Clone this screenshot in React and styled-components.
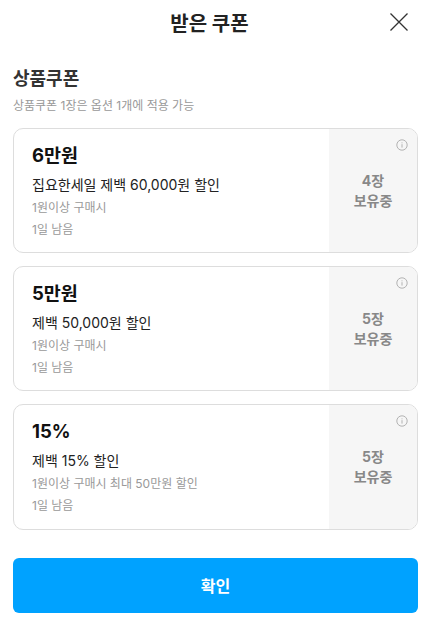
import { createGlobalStyle } from "styled-components";
import styled from "styled-components";

const Global = createGlobalStyle`
    html, body { margin: 0; padding: 0; background: #fff; }
    * { box-sizing: border-box; }
    body { font-family: Inter, "Noto Sans CJK KR", sans-serif; }
`;

const Page = styled.div`
    width: 432px;
    height: 624px;
    overflow: hidden;
    display: flex;
    flex-direction: column;
    padding: 0 14px 0 13px;
`;

const Header = styled.header`
    height: 45px;
    padding-right: 12px;
    display: flex;
    align-items: center;
    justify-content: center;
    position: relative;
`;

const HeaderTitle = styled.h1`
    margin: 0;
    font-size: 20px;
    font-weight: 700;
    color: #222;
`;

const CloseBtn = styled.button`
    position: absolute;
    right: 9px;
    top: 12px;
    width: 20px;
    height: 20px;
    padding: 0;
    border: 0;
    background: none;
    display: flex;
`;

const SectionTitle = styled.h2`
    margin: 22px 0 0;
    font-size: 18px;
    line-height: 24px;
    font-weight: 700;
    color: #333;
`;

const SectionNote = styled.p`
    margin: 6px 0 0;
    font-size: 12px;
    line-height: 18px;
    color: #999;
`;

const CouponList = styled.div`
    margin-top: 13px;
    display: flex;
    flex-direction: column;
    gap: 13px;
`;

const Card = styled.div`
    height: 125.2px;
    display: flex;
    border: 1px solid #ddd;
    border-radius: 10px;
    overflow: hidden;
`;

const CardBody = styled.div`
    flex: 1;
    padding: 12px 0 0 18px;
`;

const Amount = styled.div`
    font-size: 18.5px;
    line-height: 28px;
    font-weight: 700;
    color: #111;
`;

const CouponName = styled.div`
    margin-top: 6px;
    font-size: 14px;
    line-height: 20px;
    color: #222;
`;

const Condition = styled.div`
    margin-top: 4px;
    font-size: 12px;
    line-height: 18px;
    color: #999;
`;

const Side = styled.div`
    width: 88px;
    background: #f6f6f6;
    position: relative;
    display: flex;
    flex-direction: column;
    align-items: center;
    justify-content: center;
    font-size: 14px;
    line-height: 20px;
    font-weight: 700;
    color: #888;
`;

const InfoIcon = styled.svg`
    position: absolute;
    top: 9.5px;
    right: 9.5px;
    width: 12px;
    height: 12px;
`;

const ConfirmBtn = styled.button`
    margin-top: 28.4px;
    width: 405px;
    height: 55px;
    border: 0;
    border-radius: 6px;
    background: #00a2ff;
    color: #fff;
    font-family: inherit;
    font-size: 16px;
    font-weight: 700;
`;

const coupons = [
    { amount: "6만원", name: "집요한세일 제백 60,000원 할인", condition: "1원이상 구매시", count: "4장" },
    { amount: "5만원", name: "제백 50,000원 할인", condition: "1원이상 구매시", count: "5장" },
    { amount: "15%", name: "제백 15% 할인", condition: "1원이상 구매시 최대 50만원 할인", count: "5장" },
];

export default function App() {
    return (
        <Page>
            <Global />
            <Header>
                <HeaderTitle>받은 쿠폰</HeaderTitle>
                <CloseBtn>
                    <svg width="20" height="20" viewBox="0 0 20 20" fill="none" stroke="#333" strokeWidth="1.3">
                        <path d="M1.5 1.5 18.5 18.5M18.5 1.5 1.5 18.5" />
                    </svg>
                </CloseBtn>
            </Header>
            <SectionTitle>상품쿠폰</SectionTitle>
            <SectionNote>상품쿠폰 1장은 옵션 1개에 적용 가능</SectionNote>
            <CouponList>
                {coupons.map(c => (
                    <Card key={c.amount}>
                        <CardBody>
                            <Amount>{c.amount}</Amount>
                            <CouponName>{c.name}</CouponName>
                            <Condition>{c.condition}</Condition>
                            <Condition>1일 남음</Condition>
                        </CardBody>
                        <Side>
                            <InfoIcon viewBox="0 0 12 12" fill="none" stroke="#aaa">
                                <circle cx="6" cy="6" r="5.2" strokeWidth="0.9" />
                                <path d="M6 5.2V8.6M6 3.4V4.3" strokeWidth="0.9" />
                            </InfoIcon>
                            <span>{c.count}</span>
                            <span>보유중</span>
                        </Side>
                    </Card>
                ))}
            </CouponList>
            <ConfirmBtn>확인</ConfirmBtn>
        </Page>
    );
}
